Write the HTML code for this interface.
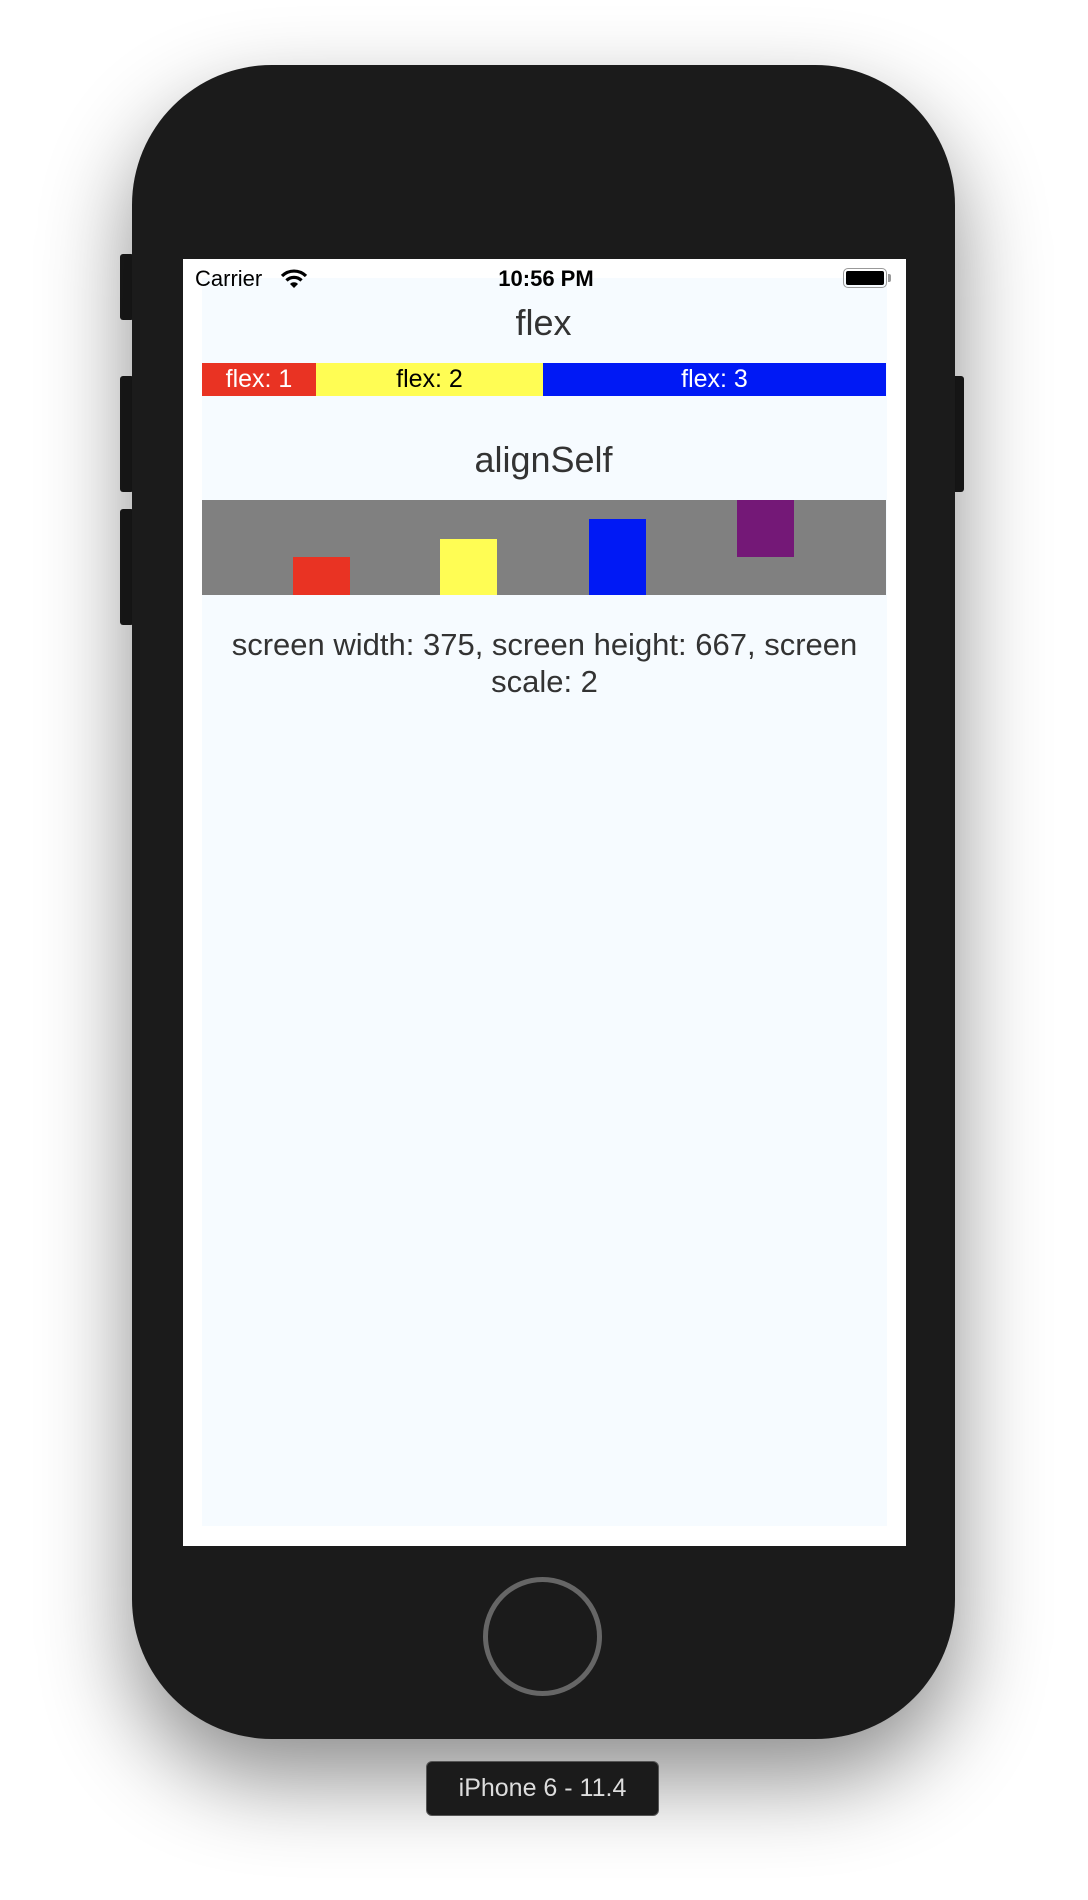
<!DOCTYPE html>
<html><head><meta charset="utf-8"><style>
body{margin:0;width:1088px;height:1900px;background:#fff;position:relative;overflow:hidden;font-family:"Liberation Sans",sans-serif}
.a{position:absolute}
.phone{left:132px;top:65px;width:823px;height:1674px;background:#1b1b1b;border-radius:140px;box-shadow:0 40px 90px rgba(0,0,0,.45)}
.btn{background:#1b1b1b;border-radius:3px}
.t{text-align:center;color:#333;white-space:nowrap}
</style></head><body>
<div class="a btn" style="left:120px;top:254px;width:14px;height:66px"></div>
<div class="a btn" style="left:120px;top:376px;width:14px;height:116px"></div>
<div class="a btn" style="left:120px;top:509px;width:14px;height:116px"></div>
<div class="a btn" style="left:952px;top:376px;width:12px;height:116px"></div>
<div class="a phone"></div>
<div class="a" style="left:183px;top:259px;width:723px;height:1287px;background:#fff"></div>
<div class="a" style="left:202px;top:278px;width:685px;height:1248px;background:#f6fbff"></div>
<div class="a" style="left:195px;top:266px;font-size:22px;color:#000">Carrier</div>
<svg class="a" style="left:280px;top:268px" width="28" height="22" viewBox="0 0 28 22">
<path d="M2 8 A17 17 0 0 1 26 8" fill="none" stroke="#000" stroke-width="3.2"/>
<path d="M6.5 12.5 A10.5 10.5 0 0 1 21.5 12.5" fill="none" stroke="#000" stroke-width="3.2"/>
<path d="M14 20 L10 16 A5.5 5.5 0 0 1 18 16 Z" fill="#000"/></svg>
<div class="a" style="left:0;width:1088px;top:266px;text-align:center;font-size:22px;font-weight:bold;color:#000"><span style="margin-left:4px">10:56 PM</span></div>
<div class="a" style="left:843px;top:268px;width:44px;height:20px;border:1.5px solid #999;border-radius:5px;box-sizing:border-box;padding:2px"><div style="background:#000;width:100%;height:100%;border-radius:2px"></div></div>
<div class="a" style="left:888px;top:274px;width:3px;height:8px;background:#999;border-radius:0 2px 2px 0"></div>
<div class="a t" style="left:202px;width:683px;top:302px;font-size:36px">flex</div>
<div class="a" style="left:202px;top:363px;width:114px;height:33px;background:#e93323;color:#fff;font-size:25px;text-align:center;line-height:33px">flex: 1</div>
<div class="a" style="left:316px;top:363px;width:227px;height:33px;background:#fffd54;color:#000;font-size:25px;text-align:center;line-height:33px">flex: 2</div>
<div class="a" style="left:543px;top:363px;width:343px;height:33px;background:#0019f5;color:#fff;font-size:25px;text-align:center;line-height:33px">flex: 3</div>
<div class="a t" style="left:202px;width:683px;top:439px;font-size:36px">alignSelf</div>
<div class="a" style="left:202px;top:500px;width:684px;height:95px;background:#808080"></div>
<div class="a" style="left:293px;top:557px;width:57px;height:38px;background:#e93323"></div>
<div class="a" style="left:440px;top:539px;width:57px;height:56px;background:#fffd54"></div>
<div class="a" style="left:589px;top:519px;width:57px;height:76px;background:#0019f5"></div>
<div class="a" style="left:737px;top:500px;width:57px;height:57px;background:#741877"></div>
<div class="a t" style="left:202px;width:685px;top:626px;font-size:31px;line-height:37px">screen width: 375, screen height: 667, screen<br>scale: 2</div>
<div class="a" style="left:483px;top:1577px;width:119px;height:119px;border:5px solid #666;border-radius:50%;box-sizing:border-box"></div>
<div class="a" style="left:426px;top:1761px;width:233px;height:55px;background:#1b1b1b;border-radius:6px;border:1px solid #555;box-sizing:border-box;color:#ddd;font-size:25px;text-align:center;line-height:53px">iPhone 6 - 11.4</div>
</body></html>
